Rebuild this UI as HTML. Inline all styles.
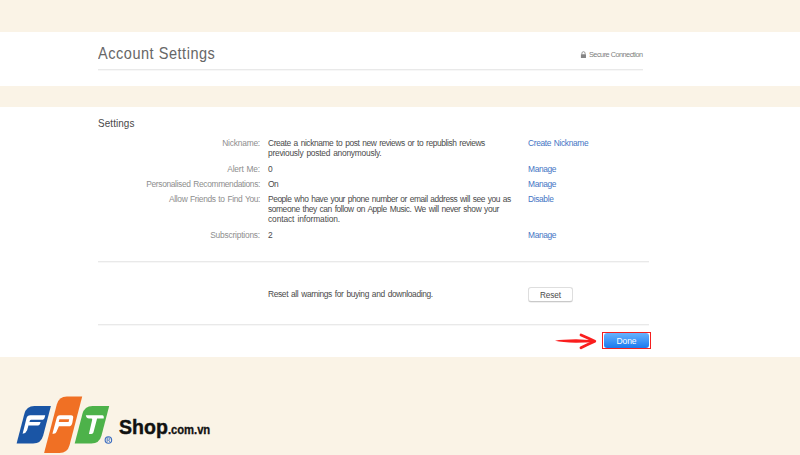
<!DOCTYPE html>
<html><head><meta charset="utf-8">
<style>
*{margin:0;padding:0;box-sizing:border-box}
html,body{width:800px;height:455px;overflow:hidden;background:#faf3e6;font-family:"Liberation Sans",sans-serif}
.a{position:absolute;white-space:nowrap}
.band{position:absolute;left:0;width:800px;background:#fff}
.hr{position:absolute;height:1px;background:#e9e9e9;box-shadow:0 1px 0 #f7f7f7}
.lbl{position:absolute;right:540px;letter-spacing:-0.4px;word-spacing:0.8px;font-size:8.4px;color:#8e8e8e;line-height:10px;text-align:right;white-space:nowrap}
.val{position:absolute;left:268px;letter-spacing:-0.4px;word-spacing:0.9px;font-size:8.4px;color:#4a4a4a;line-height:10.3px;white-space:nowrap}
.lnk{position:absolute;left:528px;letter-spacing:-0.35px;word-spacing:0.8px;font-size:8.4px;color:#4475c4;line-height:10px;white-space:nowrap}
</style></head><body>
<div class="band" style="top:32px;height:54px"></div>
<div class="band" style="top:106.6px;height:250.4px"></div>

<div id="title" class="a" style="left:98px;top:42.5px;font-size:16.5px;line-height:20px;color:#676767;letter-spacing:0.6px;transform:scaleX(0.88);transform-origin:0 0">Account Settings</div>
<svg class="a" style="left:580px;top:50.5px" width="7" height="8" viewBox="0 0 7 8"><path d="M1.9 3.6V2.3a1.6 1.6 0 0 1 3.2 0v1.3" fill="none" stroke="#8a8a8a" stroke-width="0.9"/><rect x="0.9" y="3.2" width="5.1" height="3.9" rx="0.5" fill="#858585"/></svg>
<div id="secure" class="a" style="left:589px;top:50.1px;font-size:7.3px;line-height:10px;color:#808080;letter-spacing:-0.5px">Secure Connection</div>
<div class="hr" style="left:98px;top:69px;width:545px"></div>

<div id="settings" class="a" style="left:98px;top:116.7px;font-size:11px;line-height:13px;color:#484848;letter-spacing:0.1px;transform:scaleX(0.9);transform-origin:0 0">Settings</div>

<div id="l1" class="lbl" style="letter-spacing:-0.2px;top:138px">Nickname:</div>
<div id="v1" class="val" style="top:138px">Create a nickname to post new reviews or to republish reviews<br><span style="letter-spacing:-0.23px">previously posted anonymously.</span></div>
<div id="k1" class="lnk" style="top:138px">Create Nickname</div>

<div class="lbl" style="letter-spacing:-0.17px;top:163.5px">Alert Me:</div>
<div class="val" style="top:163.5px">0</div>
<div class="lnk" style="top:163.5px">Manage</div>

<div class="lbl" style="letter-spacing:-0.345px;top:178.5px">Personalised Recommendations:</div>
<div class="val" style="top:178.5px">On</div>
<div class="lnk" style="top:178.5px">Manage</div>

<div class="lbl" style="letter-spacing:-0.35px;top:193.5px">Allow Friends to Find You:</div>
<div class="val" style="top:193.5px"><span style="letter-spacing:-0.43px">People who have your phone number or email address will see you as</span><br>someone they can follow on Apple Music. We will never show your<br><span style="letter-spacing:-0.1px">contact information.</span></div>
<div class="lnk" style="top:193.5px">Disable</div>

<div class="lbl" style="letter-spacing:-0.2px;top:229.5px">Subscriptions:</div>
<div class="val" style="top:229.5px">2</div>
<div class="lnk" style="top:229.5px">Manage</div>

<div class="hr" style="left:98px;top:261px;width:551px"></div>
<div id="reset" class="val" style="top:288.6px;letter-spacing:-0.35px">Reset all warnings for buying and downloading.</div>
<div id="resetbtn" class="a" style="left:528px;top:287px;width:45px;height:14.5px;border:1px solid #dedede;border-bottom-color:#c9c9c9;border-radius:3px;background:#fff;box-shadow:0 0.5px 0.5px rgba(0,0,0,0.12);font-size:8.2px;line-height:12px;padding-top:2.1px;text-align:center;color:#4a4a4a;letter-spacing:-0.1px">Reset</div>
<div class="hr" style="left:98px;top:324px;width:551px"></div>

<svg class="a" style="left:550px;top:328.35px" width="54" height="26" viewBox="550 328 54 26"><path d="M555 340.7 Q562 339.2 576 339.2 L594 340.2 L594 342.2 L576 342.8 Q562 342.4 555 340.7 Z" fill="#fa1e1e"/><path d="M581 335 Q588 338 594.8 341.2 Q588 344.2 581 347.8" fill="none" stroke="#fa1e1e" stroke-width="2.8" stroke-linecap="round" stroke-linejoin="round"/></svg>
<div class="a" style="left:602px;top:332px;width:49px;height:17px;border:1px solid #f41f1f"></div>
<div id="done" class="a" style="left:604px;top:333px;width:45px;height:15px;border-radius:3px;background:linear-gradient(#68b3fc,#1a7af0);color:#fff;font-size:8.5px;line-height:12px;padding-top:2.4px;text-align:center;letter-spacing:-0.1px">Done</div>

<!-- FPT logo -->
<svg class="a" style="left:0;top:380px" width="120" height="75" viewBox="0 380 120 75">
  <path d="M16.6 443.6 L24.3 414 Q26.4 406 34.4 406 L50.9 406 L43.2 435.6 Q41.1 443.6 33.1 443.6 Z" fill="#1a55a5"/>
  <path d="M44.1 453 L56.8 404.4 Q58.9 396.4 66.9 396.4 L82.2 396.4 L69.6 445 Q67.5 453 59.5 453 Z" fill="#f07024"/>
  <path d="M74.7 443.6 L82.4 414 Q84.5 406 92.5 406 L109.2 406 L101.5 435.6 Q99.4 443.6 91.4 443.6 Z" fill="#4db24a"/>
  <path d="M45.2 415.2 L30.4 415.2 Q27.2 415.2 26.5 418.2 L22.6 433.8 Q26.2 433 27.1 430.2 L29.8 420.8 Q30.1 419.7 31.2 419.7 L42.8 419.7 Q44.6 419.4 45.2 415.2 Z M29.4 422 L40.6 422 Q39.8 425.6 38 425.6 L28.5 425.6 Z" fill="#fff"/>
  <path d="M60 415.2 L71 415.2 Q73.6 415.2 73.2 417.8 L72.4 422.4 Q71.7 426.3 68.5 426.3 L58.9 426.3 L56.4 432 Q55.8 433.7 53.8 433.7 L52.4 433.7 L56.6 418.2 Q57.2 415.2 60 415.2 Z M59.4 419.2 L69.2 419.2 L68.6 422 L58.7 422 Z" fill="#fff" fill-rule="evenodd"/>
  <path d="M85.8 415.2 L102.2 415.2 Q104.2 415.2 103.7 418.6 L97.1 418.6 L93.4 432.6 Q93 434 91.4 434 L88.9 434 L92.2 419.8 Q92.4 418.6 91.2 418.6 L89 418.6 Q86.5 418.4 85.8 415.2 Z" fill="#fff"/>
  <circle cx="108.4" cy="440" r="3.25" fill="none" stroke="#3a6cc0" stroke-width="1.1"/><path d="M107.1 442.2 V437.9 H108.7 Q110 437.9 110 438.95 Q110 440 108.7 440 H107.1 M108.6 440 L110 442.2" fill="none" stroke="#3a6cc0" stroke-width="0.75"/>
</svg>
<div id="shop" class="a" style="left:119px;top:415px;font-size:21px;line-height:24px;font-weight:bold;color:#111;-webkit-text-stroke:0.45px #111"><span id="shopw" style="display:inline-block;transform:scaleX(0.93);transform-origin:0 0;letter-spacing:0px">Shop</span><span id="comvn" style="position:absolute;left:48.5px;top:3px;font-size:12.5px;letter-spacing:-0.05px;display:inline-block;transform:scaleX(0.9);transform-origin:0 0;-webkit-text-stroke:0.3px #111">.com.vn</span></div>
</body></html>
